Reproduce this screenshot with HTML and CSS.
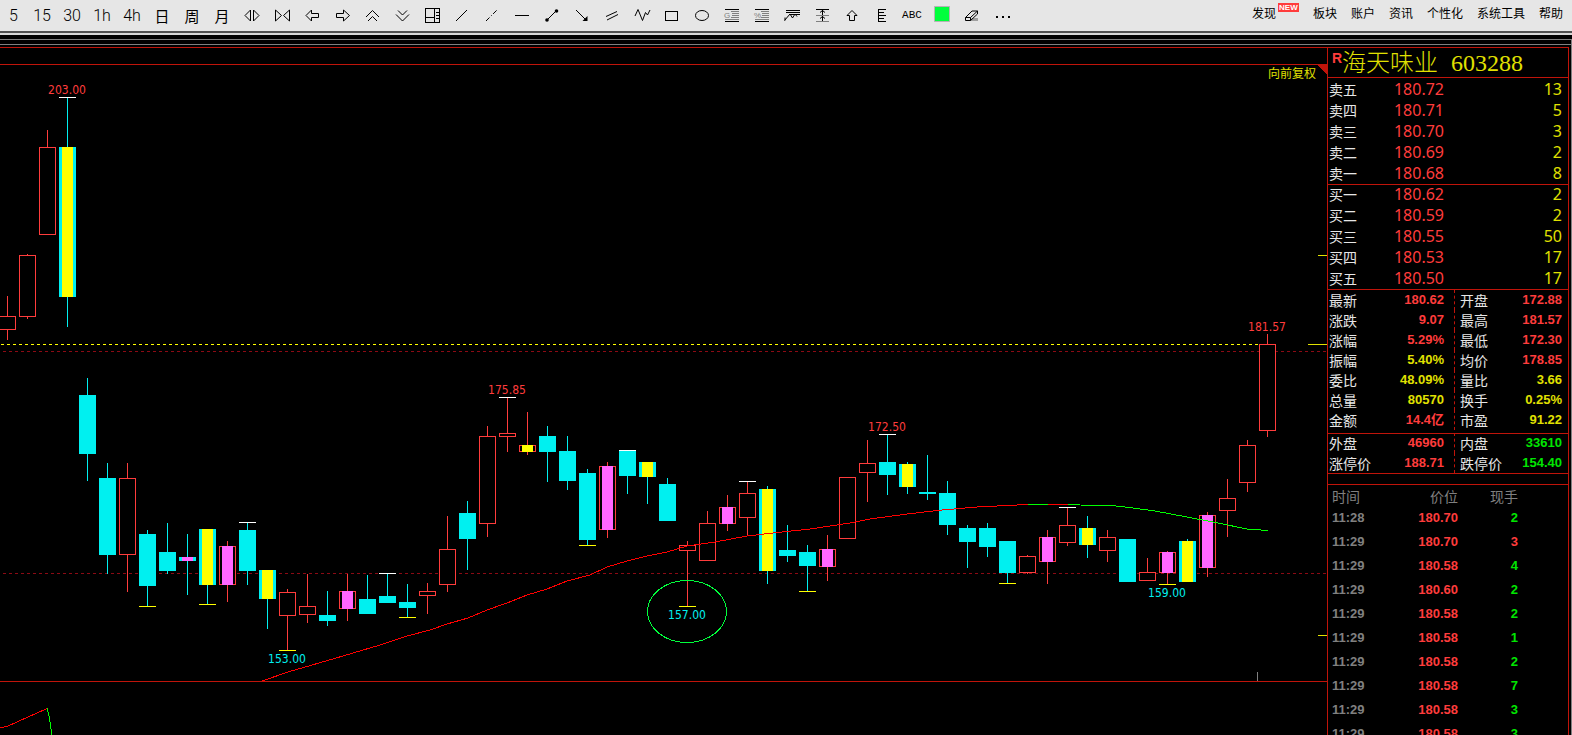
FILE: index.html
```html
<!DOCTYPE html>
<html lang="zh-CN">
<head>
<meta charset="utf-8">
<title>海天味业 603288</title>
<link rel="stylesheet" href="styles.css">
</head>
<body>
<header class="toolbar">
  <div class="tools">
    <button class="tool tool-first">5</button>
    <button class="tool">15</button>
    <button class="tool">30</button>
    <button class="tool">1h</button>
    <button class="tool">4h</button>
    <button class="tool tool-han">日</button>
    <button class="tool tool-han">周</button>
    <button class="tool tool-han">月</button>
    <button class="tool" aria-label="缩小"><svg viewBox="0 0 30 31"><path d="M13.5 10v11L8 15.5zM16.500 10v11l5.500-5.500z"/></svg></button>
    <button class="tool" aria-label="放大"><svg viewBox="0 0 30 31"><path d="M8.500 10v11l6-5.500zM22.500 10v11l-6-5.500z"/></svg></button>
    <button class="tool" aria-label="左移"><svg viewBox="0 0 30 31"><path d="M9 15.500l5.500-5.500v3.500h7v4h-7V21z"/></svg></button>
    <button class="tool" aria-label="右移"><svg viewBox="0 0 30 31"><path d="M22.500 15.500L16.500 10v3.500h-7v4h7V21z"/></svg></button>
    <button class="tool" aria-label="向上"><svg viewBox="0 0 30 31"><path d="M9 17l6.500-6.500L22 17M11 21l4.500-4.500L20 21"/></svg></button>
    <button class="tool" aria-label="向下"><svg viewBox="0 0 30 31"><path d="M9 14.500l6.500 6.500 6.500-6.500M11 10.500l4.500 4.500 4.500-4.500"/></svg></button>
    <button class="tool" aria-label="版面"><svg viewBox="0 0 30 31"><path class="crisp" d="M8.500 8.500h14v14h-14zM17.500 8v14M8 17.500h9M19 12.500h3M19 15.500h3M19 18.500h3"/></svg></button>
    <button class="tool" aria-label="直线"><svg viewBox="0 0 30 31"><path d="M9 21L20 10"/></svg></button>
    <button class="tool" aria-label="虚线"><svg viewBox="0 0 30 31"><path stroke-dasharray="5 2 1 2" d="M9 21L20 10"/></svg></button>
    <button class="tool" aria-label="水平线"><svg viewBox="0 0 30 31"><path class="crisp" d="M8 15.500h14"/></svg></button>
    <button class="tool" aria-label="线段"><svg viewBox="0 0 30 31"><path d="M10 20L19 11"/><circle class="solid-flat" cx="10" cy="20" r="1.800"/><circle class="solid-flat" cx="19.500" cy="11" r="1.800"/></svg></button>
    <button class="tool" aria-label="箭头"><svg viewBox="0 0 30 31"><path d="M9 10L19 20"/><path class="solid-flat" d="M20.500 16v5h-5z"/></svg></button>
    <button class="tool" aria-label="平行线"><svg viewBox="0 0 30 31"><path d="M9 16.500l11-5M10 20l11-5.500"/></svg></button>
    <button class="tool" aria-label="波浪线"><svg viewBox="0 0 30 31"><path d="M8 16l3-6.500 4.500 11 3-8 2 2.500L23 10"/></svg></button>
    <button class="tool" aria-label="矩形"><svg viewBox="0 0 30 31"><path class="crisp" d="M8.500 11.500h12v9h-12z"/></svg></button>
    <button class="tool" aria-label="椭圆"><svg viewBox="0 0 30 31"><ellipse cx="15" cy="15.500" rx="6.500" ry="5"/></svg></button>
    <button class="tool" aria-label="黄金分割"><svg viewBox="0 0 30 31"><path class="crisp" d="M8 9.500h14M8 21.500h14"/><path class="crisp faint" d="M14 11.500h8M15 13.500h7M15 15.500h7M14 17.500h8M8 19.500h14"/><text x="7" y="18">G</text></svg></button>
    <button class="tool" aria-label="百分比线"><svg viewBox="0 0 30 31"><path class="crisp" d="M8 9.500h14M8 21.500h14"/><path class="crisp faint" d="M14 11.500h8M15 13.500h7M15 15.500h7M14 17.500h8M8 19.500h14"/><text x="7" y="18">%</text></svg></button>
    <button class="tool" aria-label="波段线"><svg viewBox="0 0 30 31"><path class="crisp" d="M9 10.500h14M9 12.500h14M12 14.500h11"/><path d="M7.500 20.500l5.500-6.500 2.500 4 2.500-4 2 2.500"/><path d="M8 17.500v3"/></svg></button>
    <button class="tool" aria-label="量度"><svg viewBox="0 0 30 31"><path class="crisp" d="M9 9.500h13M15.500 9v12"/><path class="crisp faint" d="M9 15.500h13M9 21.500h13"/><path d="M13 12.500l2.500-2 2.500 2M13 18.500l2.500-2 2.500 2"/></svg></button>
    <button class="tool" aria-label="上箭头"><svg viewBox="0 0 30 31"><path d="M15 10.500l5 5h-2.500v5h-5v-5H10z"/></svg></button>
    <button class="tool" aria-label="标尺"><svg viewBox="0 0 30 31"><path class="crisp" d="M19 9.500h-7.500v12H19M12 12.500h5M12 15.500h7M12 18.500h5"/></svg></button>
    <button class="tool tool-abc">ABC</button>
    <button class="tool" aria-label="颜色"><svg viewBox="0 0 30 31"><path class="swatch" d="M7.500 6.500h15v15h-15z"/></svg></button>
    <button class="tool" aria-label="擦除"><svg viewBox="0 0 30 31"><path class="shade" d="M15 18h6v3h-8z"/><path d="M8.500 17.500l6.500-6.500h5.500l-7 6.500zM8.500 17.500v3h5l7-6.500v-3M13.500 17.500v3"/></svg></button>
    <button class="tool" aria-label="更多"><svg viewBox="0 0 30 31"><path class="solid-flat" d="M9 16h2v2H9zM15 16h2v2h-2zM21 16h2v2h-2z"/></svg></button>
  </div>
  <nav class="menu">
    <a class="menu-new" href="#">发现<span class="badge">NEW</span></a>
    <a href="#">板块</a>
    <a href="#">账户</a>
    <a href="#">资讯</a>
    <a href="#">个性化</a>
    <a href="#">系统工具</a>
    <a href="#">帮助</a>
  </nav>
</header>
<div class="frame">
  <main class="workspace">
    <section class="chart" aria-label="K线图">
      <svg id="chart" class="chart-canvas"></svg>
    </section>
    <aside class="quote">
      <h1 class="stock"><span class="mark">R</span>海天味业<span class="code">603288</span></h1>
      <table class="orders">
        <tbody>
          <tr><th>卖五</th><td>180.72</td><td>13</td></tr>
          <tr><th>卖四</th><td>180.71</td><td>5</td></tr>
          <tr><th>卖三</th><td>180.70</td><td>3</td></tr>
          <tr><th>卖二</th><td>180.69</td><td>2</td></tr>
          <tr><th>卖一</th><td>180.68</td><td>8</td></tr>
        </tbody>
        <tbody>
          <tr class="divided"><th>买一</th><td>180.62</td><td>2</td></tr>
          <tr><th>买二</th><td>180.59</td><td>2</td></tr>
          <tr><th>买三</th><td>180.55</td><td>50</td></tr>
          <tr><th>买四</th><td>180.53</td><td>17</td></tr>
          <tr><th>买五</th><td>180.50</td><td>17</td></tr>
        </tbody>
      </table>
      <table class="stats">
        <tbody>
          <tr><th>最新</th><td class="up">180.62</td><th>开盘</th><td class="up">172.88</td></tr>
          <tr><th>涨跌</th><td class="up">9.07</td><th>最高</th><td class="up">181.57</td></tr>
          <tr><th>涨幅</th><td class="up">5.29%</td><th>最低</th><td class="up">172.30</td></tr>
          <tr><th>振幅</th><td>5.40%</td><th>均价</th><td class="up">178.85</td></tr>
          <tr><th>委比</th><td>48.09%</td><th>量比</th><td>3.66</td></tr>
          <tr><th>总量</th><td>80570</td><th>换手</th><td>0.25%</td></tr>
          <tr><th>金额</th><td class="up">14.4亿</td><th>市盈</th><td>91.22</td></tr>
        </tbody>
      </table>
      <table class="stats limits">
        <tbody>
          <tr><th>外盘</th><td class="up">46960</td><th>内盘</th><td class="down">33610</td></tr>
          <tr><th>涨停价</th><td class="up">188.71</td><th>跌停价</th><td class="down">154.40</td></tr>
        </tbody>
      </table>
      <div class="spacer"></div>
      <table class="trades">
        <thead><tr><th>时间</th><th>价位</th><th>现手</th></tr></thead>
        <tbody>
          <tr><td>11:28</td><td>180.70</td><td class="down">2</td></tr>
          <tr><td>11:29</td><td>180.70</td><td class="up">3</td></tr>
          <tr><td>11:29</td><td>180.58</td><td class="down">4</td></tr>
          <tr><td>11:29</td><td>180.60</td><td class="down">2</td></tr>
          <tr><td>11:29</td><td>180.58</td><td class="down">2</td></tr>
          <tr><td>11:29</td><td>180.58</td><td class="down">1</td></tr>
          <tr><td>11:29</td><td>180.58</td><td class="down">2</td></tr>
          <tr><td>11:29</td><td>180.58</td><td class="down">7</td></tr>
          <tr><td>11:29</td><td>180.58</td><td class="down">3</td></tr>
          <tr><td>11:29</td><td>180.58</td><td class="down">3</td></tr>
        </tbody>
      </table>
    </aside>
  </main>
</div>
<script src="chart.js"></script>
</body>
</html>
```
FILE: styles.css
```css
* { box-sizing: border-box; }

:root {
  --rule: #c0140a;
  --up: #ff3c3c;
  --down: #00e600;
  --note: #e1e100;
  --han: "Noto Sans CJK SC", sans-serif;
}

body {
  margin: 0;
  height: 100vh;
  overflow: hidden;
  display: flex;
  flex-direction: column;
  background: #000;
  font-family: "Liberation Sans", var(--han);
}

/* Toolbar */
.toolbar {
  display: flex;
  justify-content: space-between;
  flex: none;
  background: #e6e6e6;
  border-bottom: 2px solid #d8d8d8;
  box-shadow: inset 0 -2px #505050;
  height: 35px;
}

.tools { display: flex; }

.tool {
  width: 30px;
  height: 31px;
  padding: 0;
  border: 0;
  background: none;
  color: #000;
  font: 300 16px/31px Roboto, sans-serif;
  text-align: center;
}

.tool-first { width: 27px; }
.tool-han { font: 15px/29px var(--han); }
.tool-abc { font: 11px/31px "Liberation Mono", monospace; }

.tool svg {
  display: block;
  width: 30px;
  height: 31px;
  fill: none;
  stroke: #000;
}

.tool text {
  fill: #808080;
  stroke: none;
  font: 8px "Liberation Sans", sans-serif;
}

.tool .crisp { shape-rendering: crispEdges; }
.tool .faint { stroke: #808080; }
.tool .solid-flat { fill: #000; stroke: none; }
.tool .shade { fill: #a0a0a0; stroke: none; }
.tool .swatch { fill: #00ff3c; stroke: #b4b4b4; }

.menu {
  display: flex;
  gap: 14px;
  padding-right: 9px;
}

.menu a {
  color: #000;
  font: 12px/26px var(--han);
  text-decoration: none;
  white-space: nowrap;
}

.menu .menu-new {
  display: flex;
  align-items: flex-start;
  gap: 2px;
}

.badge {
  width: 21px;
  height: 9px;
  margin: 3px 0 0;
  background: #ff3c3c;
  color: #fff;
  font: bold 8px/9px "Liberation Sans", sans-serif;
  text-align: center;
}

/* Window frame */
.frame {
  flex: 1;
  min-height: 0;
  display: flex;
  flex-direction: column;
  margin-top: 4px;
  padding-top: 4px;
  border-top: 1px solid #808080;
  border-right: 1px solid #808080;
}

.workspace {
  flex: 1;
  min-height: 0;
  display: flex;
  padding: 2px 2px 0 0;
  border-top: 1px solid #808080;
}

.chart {
  flex: 1;
  min-width: 0;
  border-top: 1px solid var(--rule);
}

.chart-canvas {
  display: block;
  width: 100%;
  height: 100%;
  shape-rendering: crispEdges;
}

.chart-canvas text { font: 12px "DejaVu Sans Condensed", "Noto Sans", sans-serif; }
.chart-canvas .adjust { font: 12px var(--han); }

/* Quote panel */
.quote {
  flex: none;
  width: 242px;
  overflow: hidden;
  border: 1px solid var(--rule);
  border-bottom: 0;
}

.stock {
  display: flex;
  align-items: flex-start;
  height: 29px;
  margin: 0;
  padding-left: 4px;
  color: var(--note);
  font: 300 24px/30px "Liberation Serif", var(--han);
  white-space: nowrap;
}

.mark {
  width: 10px;
  color: var(--up);
  font: bold 14px/20px "Liberation Sans", sans-serif;
}

.code { padding-left: 13px; }

table {
  width: 100%;
  table-layout: fixed;
  border-collapse: separate;
  border-spacing: 0;
}

th {
  padding: 0;
  color: #e6e6e6;
  font: 14px/20px var(--han);
  text-align: left;
  vertical-align: top;
}

td {
  padding: 0;
  font: bold 13px/21px "Liberation Sans", var(--han);
  text-align: right;
  vertical-align: top;
}

.stats tr { height: 20px; }
.stats td { line-height: 20px; }

.orders {
  padding-top: 1px;
  border-top: 1px solid var(--rule);
}

.orders th {
  width: 46px;
  padding-left: 1px;
  line-height: 21px;
}

.orders td {
  width: 70px;
  color: var(--up);
  font: 16px/21px "Noto Sans", sans-serif;
}

.orders td:last-child {
  width: auto;
  padding-right: 6px;
  color: var(--note);
}

.divided > * { box-shadow: inset 0 1px var(--rule); }

.stats {
  padding: 0 0 3px;
  border-top: 1px solid var(--rule);
  color: var(--note);
}

.stats th:first-child {
  width: 46px;
  padding-left: 1px;
}

.stats td:nth-child(2) {
  width: 81px;
  padding-right: 10px;
  border-right: 1px dashed var(--rule);
}

.stats th:nth-child(3) {
  width: 53px;
  padding-left: 5px;
}

.stats td:last-child { padding-right: 6px; }

.limits {
  padding: 0;
  border-top: 0;
  box-shadow: inset 0 1px var(--rule);
}

.up { color: var(--up); }
.down { color: var(--down); }

.spacer {
  height: 11px;
  border-top: 1px solid var(--rule);
}

.trades {
  padding-top: 1px;
  border-top: 1px solid var(--rule);
}

.trades th {
  color: #808080;
  text-align: right;
}

.trades td {
  color: var(--up);
  line-height: 24px;
}

.trades tr > :first-child {
  width: 60px;
  padding-left: 4px;
  color: #808080;
  text-align: left;
}

.trades tr > :nth-child(2) { width: 70px; }
.trades tr > :nth-child(3) { padding-right: 50px; }
.trades td.down { color: var(--down); }
```
FILE: chart.js
```js
const svg = document.getElementById('chart');
const NS = 'http://www.w3.org/2000/svg';
const TOP = 48, STEP = 20, BODY = 17;
const UP = '#ff3c3c', DOWN = '#00f0f0', RULE = '#c0140a', YELLOW = '#ffff00', PINK = '#ff66ff';

function add(tag, attrs, text) {
  const node = document.createElementNS(NS, tag);
  for (const key in attrs) node.setAttribute(key, attrs[key]);
  if (text) node.textContent = text;
  svg.appendChild(node);
  return node;
}
const rect = (x, y, width, height, fill) => add('rect', { x, y: y - TOP, width, height, fill });
const level = (y, stroke, extra) =>
  add('line', Object.assign({ x1: 0, x2: '100%', y1: y - TOP + 0.5, y2: y - TOP + 0.5, stroke }, extra));

// kind (R rising, C falling; Y or P adds a core stripe), high, body top, body bottom, low, cap (h or l)
const candles = [
  ['R', 296, 316, 330, 340], ['R', 254, 255, 317, 319], ['R', 130, 147, 235, 235], ['CY', 98, 147, 297, 327, 'h'],
  ['C', 378, 395, 454, 481], ['C', 463, 478, 555, 574], ['R', 463, 478, 555, 592], ['C', 530, 534, 586, 606, 'l'],
  ['C', 523, 552, 571, 574], ['CP', 534, 557, 561, 595], ['CY', 529, 529, 585, 604, 'l'], ['RP', 541, 546, 585, 602],
  ['C', 523, 530, 571, 585, 'h'], ['CY', 570, 570, 599, 629], ['R', 589, 592, 616, 650, 'l'], ['R', 574, 606, 615, 623],
  ['C', 591, 615, 621, 626], ['RP', 574, 591, 609, 621], ['C', 575, 599, 614, 614], ['C', 574, 596, 603, 603, 'h'],
  ['C', 584, 602, 608, 617, 'l'], ['R', 583, 591, 596, 614], ['R', 516, 549, 585, 592], ['C', 501, 513, 539, 570],
  ['R', 426, 436, 524, 537], ['R', 398, 433, 437, 452, 'h'], ['RY', 412, 445, 452, 455], ['C', 426, 436, 452, 482],
  ['C', 436, 451, 481, 490], ['C', 469, 473, 540, 545, 'l'], ['RP', 462, 466, 530, 538], ['C', 451, 451, 476, 494, 'h'],
  ['CY', 462, 462, 477, 504], ['C', 478, 484, 521, 521], ['R', 541, 545, 551, 606, 'l'], ['R', 511, 523, 561, 561],
  ['RP', 495, 507, 524, 531], ['R', 482, 493, 518, 535, 'h'], ['CY', 486, 489, 571, 584], ['C', 525, 550, 556, 562],
  ['C', 545, 552, 566, 591, 'l'], ['RP', 535, 549, 567, 581], ['R', 477, 477, 539, 539], ['R', 440, 463, 473, 502],
  ['C', 435, 462, 475, 495, 'h'], ['CY', 462, 464, 487, 494], ['C', 455, 492, 494, 500], ['C', 481, 493, 525, 535],
  ['C', 525, 528, 542, 568], ['C', 523, 528, 547, 557], ['C', 541, 541, 573, 583, 'l'], ['R', 555, 556, 573, 574],
  ['RP', 530, 537, 562, 584], ['R', 508, 525, 543, 546, 'h'], ['CY', 516, 528, 545, 558], ['R', 530, 537, 551, 562],
  ['C', 539, 539, 582, 582], ['R', 558, 572, 581, 581], ['RP', 551, 552, 573, 584, 'l'], ['CY', 539, 541, 582, 582],
  ['RP', 512, 515, 568, 577], ['R', 479, 498, 511, 537], ['R', 440, 445, 483, 492], ['R', 334, 344, 431, 437]
];

level(64, RULE);
level(351, '#8c0a14', { 'stroke-dasharray': '3 3', 'stroke-dashoffset': 3 });
level(573, '#8c0a14', { 'stroke-dasharray': '3 3', 'stroke-dashoffset': 3 });
level(344, YELLOW, { 'stroke-dasharray': '3 3', 'stroke-dashoffset': 5, x2: 1264 });
level(681, RULE);

candles.forEach(([kind, high, top, bottom, low, cap], i) => {
  const mid = 7 + i * STEP, left = mid - 8;
  const rising = kind[0] === 'R', color = rising ? UP : DOWN;
  rect(mid, high, 1, top - high, color);
  rect(mid, bottom, 1, low - bottom, color);
  if (rising) {
    add('rect', { x: left + 0.5, y: top - TOP + 0.5, width: BODY - 1, height: bottom - top - 1, fill: '#000', stroke: UP });
  } else {
    rect(left, top, BODY, bottom - top, DOWN);
  }
  if (kind[1]) rect(left + 3, top, 11, bottom - top, kind[1] === 'Y' ? YELLOW : PINK);
  if (cap === 'h') rect(left, high - 1, BODY, 1, '#ffffff');
  if (cap === 'l') rect(left, low, BODY, 1, YELLOW);
});

function curve(points, stroke) {
  add('polyline', { points: points.map(([x, y]) => x + ',' + (y - TOP)).join(' '), fill: 'none', stroke });
}
curve([[262, 681], [288, 672], [343, 656], [380, 645], [407, 636], [430, 630], [447, 624], [468, 618], [487, 610],
  [507, 603], [527, 595], [547, 589], [567, 581], [590, 575], [607, 567], [627, 561], [647, 556], [667, 552],
  [687, 546], [715, 542], [747, 536], [782, 532], [810, 529], [850, 523], [870, 519], [907, 514], [942, 510],
  [977, 507], [1017, 505], [1028, 504]], '#ff0000');
curve([[1028, 504.5], [1048, 504.5]], '#00ff00');
curve([[1048, 504.5], [1068, 504.5]], '#ff0000');
curve([[1068, 504.5], [1080, 505], [1112, 505.5], [1133, 508], [1155, 511], [1187, 517], [1213, 522],
  [1247, 529], [1268, 530.5]], '#00ff00');
curve([[0, 728], [8, 726], [47, 708.5]], '#ff0000');
curve([[47, 708.5], [49, 716], [52, 735]], '#00ff00');

add('ellipse', { cx: 687, cy: 611.5 - TOP, rx: 39.5, ry: 31, fill: 'none', stroke: '#00ff3c' });

[['203.00', 67, 94, UP], ['175.85', 507, 394, UP], ['172.50', 887, 431, UP], ['181.57', 1267, 331, UP],
 ['153.00', 287, 663, DOWN], ['157.00', 687, 619, DOWN], ['159.00', 1167, 597, DOWN]]
  .forEach(([text, x, y, fill]) => add('text', { x, y: y - TOP, fill, 'text-anchor': 'middle' }, text));

// Marks aligned to the right edge of the plot
function edge(y, width, fill) {
  rect('100%', y, width, 1, fill).setAttribute('transform', 'translate(' + -width + ' 0)');
}
edge(344, 19, '#e1e100');
edge(255, 9, '#e1e100');
edge(635, 9, '#e1e100');
rect(1257, 672, 1, 9, '#808080');
const flag = add('svg', { x: '100%', y: 65 - TOP, overflow: 'visible' });
const corner = document.createElementNS(NS, 'path');
corner.setAttribute('d', 'M-10 0H0V9z');
corner.setAttribute('fill', RULE);
flag.appendChild(corner);
add('text', { x: '100%', dx: -11, y: 78 - TOP, class: 'adjust', fill: '#e1e100', 'text-anchor': 'end' }, '向前复权');
```
